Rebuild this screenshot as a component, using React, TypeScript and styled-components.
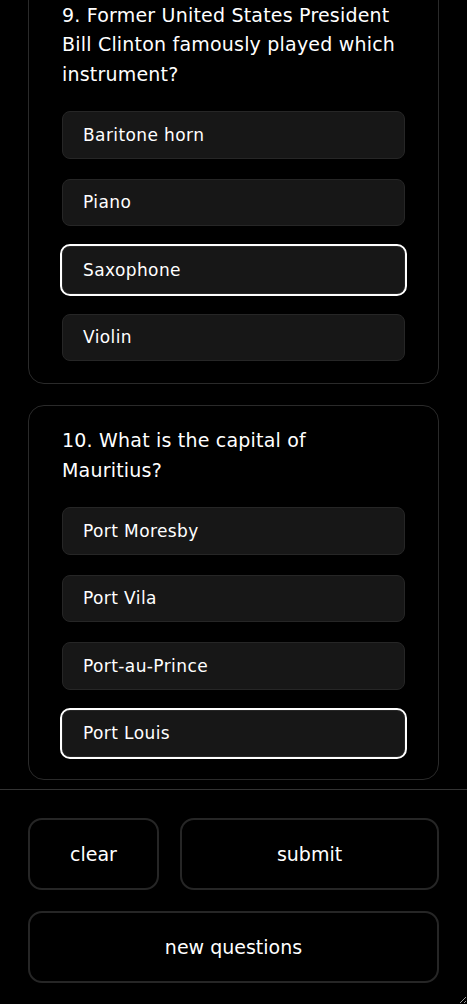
import styled, { createGlobalStyle } from "styled-components";

interface Question {
  id: number;
  text: string;
  answers: string[];
  picked: string;
}

const questions: Question[] = [
  {
    id: 9,
    text: "Former United States President Bill Clinton famously played which instrument?",
    answers: ["Baritone horn", "Piano", "Saxophone", "Violin"],
    picked: "Saxophone",
  },
  {
    id: 10,
    text: "What is the capital of Mauritius?",
    answers: ["Port Moresby", "Port Vila", "Port-au-Prince", "Port Louis"],
    picked: "Port Louis",
  },
];

const GlobalStyle = createGlobalStyle`
  html, body {
    margin: 0;
    background: #000;
    color: #fff;
    font-family: "DejaVu Sans", "Liberation Sans", sans-serif;
  }
  * {
    box-sizing: border-box;
  }
`;

const App = () => {
  return (
    <Page>
      <GlobalStyle />
      <QuestionList>
        {questions.map((q) => (
          <Card key={q.id}>
            <QuestionText>{`${q.id}. ${q.text}`}</QuestionText>
            <Answers>
              {q.answers.map((a) => (
                <Answer key={a} $selected={a === q.picked}>
                  {a}
                </Answer>
              ))}
            </Answers>
          </Card>
        ))}
      </QuestionList>

      <Footer>
        <ActionButton>clear</ActionButton>
        <ActionButton>submit</ActionButton>
        <ActionButton $wide>new questions</ActionButton>
      </Footer>
    </Page>
  );
};

// resizable shell, the browser draws the grip in the bottom-right corner
const Page = styled.div`
  display: flex;
  flex-direction: column;
  overflow: hidden;
  resize: both;
  height: 1004px;
`;

/* list is scrolled, first card starts above the viewport */
const QuestionList = styled.main`
  display: flex;
  flex-direction: column;
  gap: 21px;
  padding: 0 28px 9px;
  margin-top: -20.5px;
`;

const Card = styled.section`
  border: 1px solid #2a2a2a;
  border-radius: 16px;
  padding: 20px 33px 22px;
`;

const QuestionText = styled.p`
  margin: 0 0 22px;
  font-size: 19px;
  letter-spacing: 0.2px;
  line-height: 29.5px;
`;

const Answers = styled.div`
  display: flex;
  flex-direction: column;
  gap: 20px;
`;

const Answer = styled.button<{ $selected?: boolean }>`
  height: 47.5px;
  width: 100%;
  padding: 0 20px;
  text-align: left;
  font: inherit;
  font-size: 17px;
  letter-spacing: 0.4px;
  color: #fff;
  background: #171717;
  border: 1px solid #262626;
  outline: ${(p) => (p.$selected ? "2px solid #fff" : "none")};
  border-radius: 8px;
  cursor: pointer;
`;

const Footer = styled.footer`
  border-top: 1px solid #333;
  padding: 28px 28px 21px;
  display: grid;
  grid-template-columns: 131px 1fr;
  gap: 21px;
`;

const ActionButton = styled.button<{ $wide?: boolean }>`
  grid-column: ${(p) => (p.$wide ? "1 / -1" : "auto")};
  height: 72px;
  background: #000;
  color: #fff;
  border: 2px solid #262626;
  border-radius: 14px;
  font: inherit;
  font-size: 19px;
  cursor: pointer;
`;

export default App;
